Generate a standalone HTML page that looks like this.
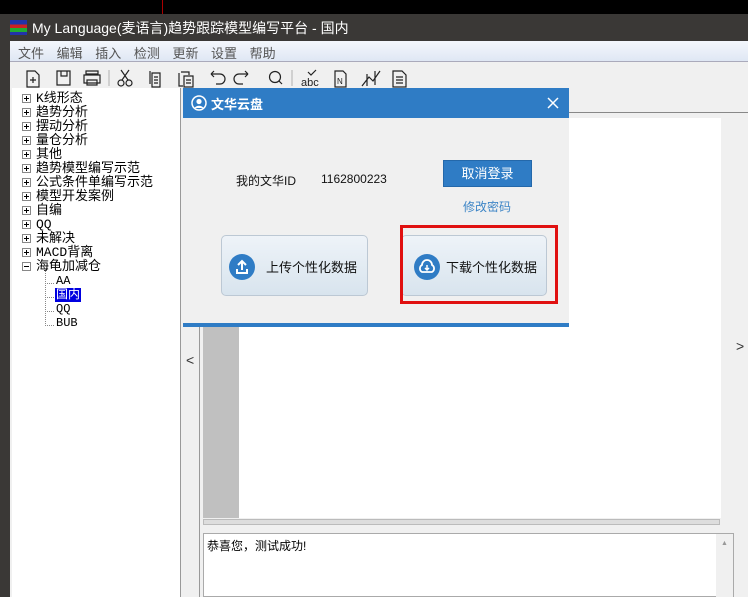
<!DOCTYPE html>
<html><head><meta charset="utf-8"><style>
*{margin:0;padding:0;box-sizing:border-box}
body{width:748px;height:597px;overflow:hidden;background:#000;font-family:"Liberation Sans","Noto Sans CJK SC",sans-serif;font-size:12px;position:relative}
.a{position:absolute}
.tree div{position:absolute;left:22px;font-family:"Liberation Mono","Noto Sans CJK SC",monospace;font-size:13px;color:#000;line-height:14px;white-space:nowrap}
.tree div b{display:inline-block;width:9px;height:9px;border:1px solid #888;margin-right:5px;vertical-align:-1px;position:relative;background:#fff}
.tree div b:before{content:"";position:absolute;left:1px;top:3px;width:5px;height:1px;background:#000}
.tree div b.p:after{content:"";position:absolute;left:3px;top:1px;width:1px;height:5px;background:#000}
</style></head><body>
<div class="a" style="left:162px;top:0;width:1px;height:14px;background:#a00"></div>
<div class="a" style="left:0;top:14px;width:748px;height:583px;background:#3a3836"></div>
<div class="a" style="left:10px;top:20px;width:17px;height:15px;background:linear-gradient(#2233aa 0 30%,#cc2222 30% 55%,#22aa33 55% 80%,#2233aa 80%)"></div>
<div class="a" style="left:32px;top:18px;color:#fff;font-size:14px;line-height:20px">My Language(麦语言)趋势跟踪模型编写平台 - 国内</div>
<div class="a" style="left:10px;top:41px;width:738px;height:556px;background:#f0f0f0"></div>
<div class="a" style="left:10px;top:41px;width:738px;height:21px;background:linear-gradient(#f4f7fc,#dfe7f4);border-bottom:1px solid #aab"></div>
<div class="a" style="left:18px;top:43px;color:#555;font-size:13px;word-spacing:9px">文件 编辑 插入 检测 更新 设置 帮助</div>
<svg class="a" style="left:10px;top:62px" width="400" height="26" fill="none" stroke="#222" stroke-width="1.2">
<path d="M17 9h8l4 4v12H17z M20 18h6 M23 15v6"/>
<path d="M47 9h13v14H47z M51 9v5h6V9"/>
<path d="M76 12h12v-3H76z M74 13h16v8H74z M77 18h10v5H77z"/>
<line x1="99" y1="8" x2="99" y2="24" stroke="#bbb"/>
<circle cx="111" cy="21" r="3"/><circle cx="119" cy="21" r="3"/><path d="M112 18l7-10 M118 18l-7-10"/>
<path d="M142 11h8v14h-8z M140 9v13"/><path d="M144 15h4M144 18h4M144 21h4"/>
<path d="M171 10h8v3 M169 11v13h4 M174 14h9v11h-9z M176 18h5 M176 21h5"/>
<path d="M201 12h9a5 5 0 0 1 0 10h-4 M201 12l3-3 M201 12l3 3"/>
<path d="M238 12h-9a5 5 0 0 0 0 10h4 M238 12l-3-3 M238 12l-3 3"/>
<circle cx="265" cy="15" r="5.5"/><path d="M269 19l3 3"/>
<line x1="282" y1="8" x2="282" y2="24" stroke="#bbb"/>
<text x="291" y="24" font-size="11" fill="#222" stroke="none" font-family="Liberation Sans">abc</text><path d="M298 10l3 3 5-5"/>
<path d="M325 9h8l3 3v13h-11z"/><text x="327" y="22" font-size="8" fill="#222" stroke="none">N</text>
<path d="M352 24l7-9 4 4 7-10 M357 12v12 M365 9v14"/>
<path d="M383 9h9l4 4v12h-13z M386 15h7M386 18h7M386 21h7"/>
</svg>
<div class="a" style="left:12px;top:88px;width:169px;height:509px;background:#fff;border-right:1px solid #999"></div>
<div class="tree a" style="left:0;top:92px">
<div style="top:0"><b class="p"></b>K线形态</div>
<div style="top:14px"><b class="p"></b>趋势分析</div>
<div style="top:28px"><b class="p"></b>摆动分析</div>
<div style="top:42px"><b class="p"></b>量仓分析</div>
<div style="top:56px"><b class="p"></b>其他</div>
<div style="top:70px"><b class="p"></b>趋势模型编写示范</div>
<div style="top:84px"><b class="p"></b>公式条件单编写示范</div>
<div style="top:98px"><b class="p"></b>模型开发案例</div>
<div style="top:112px"><b class="p"></b>自编</div>
<div style="top:126px"><b class="p"></b>QQ</div>
<div style="top:140px"><b class="p"></b>未解决</div>
<div style="top:154px"><b class="p"></b>MACD背离</div>
<div style="top:168px"><b></b>海龟加减仓</div>
<div style="top:182px;left:56px;font-size:12px">AA</div>
<div style="top:196px;left:55px;background:#0000e0;color:#fff;padding:0 1px;font-size:12px">国内</div>
<div style="top:210px;left:56px;font-size:12px">QQ</div>
<div style="top:224px;left:56px;font-size:12px">BUB</div>
</div>
<div class="a" style="left:45px;top:268px;width:1px;height:58px;border-left:1px dotted #888"></div>
<div class="a" style="left:45px;top:283px;width:9px;border-top:1px dotted #888"></div>
<div class="a" style="left:45px;top:297px;width:9px;border-top:1px dotted #888"></div>
<div class="a" style="left:45px;top:311px;width:9px;border-top:1px dotted #888"></div>
<div class="a" style="left:45px;top:325px;width:9px;border-top:1px dotted #888"></div>
<div class="a" style="left:199px;top:112px;width:549px;height:1px;background:#888"></div>
<div class="a" style="left:199px;top:112px;width:1px;height:485px;background:#999"></div>
<div class="a" style="left:569px;top:118px;width:152px;height:400px;background:#fff"></div>
<div class="a" style="left:239px;top:327px;width:482px;height:191px;background:#fff"></div>
<div class="a" style="left:203px;top:327px;width:36px;height:191px;background:#c0c0c0"></div>
<div class="a" style="left:186px;top:352px;font-size:14px;color:#333">&lt;</div>
<div class="a" style="left:736px;top:338px;font-size:14px;color:#333">&gt;</div>
<div class="a" style="left:203px;top:519px;width:517px;height:6px;background:#ddd;border:1px solid #bbb"></div>
<div class="a" style="left:203px;top:533px;width:531px;height:64px;background:#fff;border:1px solid #aaa"></div>
<div class="a" style="left:716px;top:534px;width:17px;height:63px;background:#f0f0f0"></div>
<div class="a" style="left:721px;top:540px;font-size:7px;color:#999">▲</div>
<div class="a" style="left:207px;top:537px;font-size:12px;color:#000">恭喜您，测试成功!</div>
<div class="a" style="left:183px;top:88px;width:386px;height:239px;background:#f0f0f0"></div>
<div class="a" style="left:183px;top:88px;width:386px;height:30px;background:#2f7cc5"></div>
<svg class="a" style="left:191px;top:95px" width="16" height="16"><circle cx="8" cy="8" r="7" fill="none" stroke="#fff" stroke-width="1.5"/><circle cx="8" cy="6.5" r="2.6" fill="#fff"/><path d="M3.5 13a5 4 0 0 1 9 0z" fill="#fff"/></svg>
<div class="a" style="left:211px;top:94px;color:#fff;font-size:13px;font-weight:bold">文华云盘</div>
<svg class="a" style="left:547px;top:97px" width="12" height="12" stroke="#fff" stroke-width="1.5"><path d="M1 1l10 10M11 1L1 11"/></svg>
<div class="a" style="left:183px;top:323px;width:386px;height:4px;background:#2f7cc5"></div>
<div class="a" style="left:236px;top:172px;font-size:12px;color:#111">我的文华ID</div>
<div class="a" style="left:321px;top:172px;font-size:12px;color:#111">1162800223</div>
<div class="a" style="left:443px;top:160px;width:89px;height:27px;background:#2f7cc5;border:1px solid #2468aa;color:#fff;font-size:13px;text-align:center;line-height:25px">取消登录</div>
<div class="a" style="left:463px;top:198px;font-size:12px;color:#3d85c6">修改密码</div>
<div class="a" style="left:221px;top:235px;width:147px;height:61px;border:1px solid #bcc8d4;border-radius:5px;background:linear-gradient(#eef3f8,#d8e4ee)"></div>
<div class="a" style="left:401px;top:235px;width:146px;height:61px;border:1px solid #bcc8d4;border-radius:5px;background:linear-gradient(#eef3f8,#d8e4ee)"></div>
<div class="a" style="left:400px;top:225px;width:158px;height:79px;border:3px solid #e01010"></div>
<svg class="a" style="left:229px;top:254px" width="26" height="26"><circle cx="13" cy="13" r="13" fill="#2f7cc5"/><path d="M13 7v9M9 11l4-4 4 4M8 15v4h10v-4" fill="none" stroke="#fff" stroke-width="2"/></svg>
<svg class="a" style="left:414px;top:254px" width="26" height="26"><circle cx="13" cy="13" r="13" fill="#2f7cc5"/><path d="M8 18a4 4 0 0 1 0-7 5 5 0 0 1 10 0 4 4 0 0 1 0 7z" fill="none" stroke="#fff" stroke-width="1.8"/><path d="M13 11v5M11 14l2 2 2-2" fill="none" stroke="#fff" stroke-width="1.5"/></svg>
<div class="a" style="left:266px;top:257px;font-size:13px;color:#111">上传个性化数据</div>
<div class="a" style="left:446px;top:257px;font-size:13px;color:#111">下载个性化数据</div>
</body></html>
